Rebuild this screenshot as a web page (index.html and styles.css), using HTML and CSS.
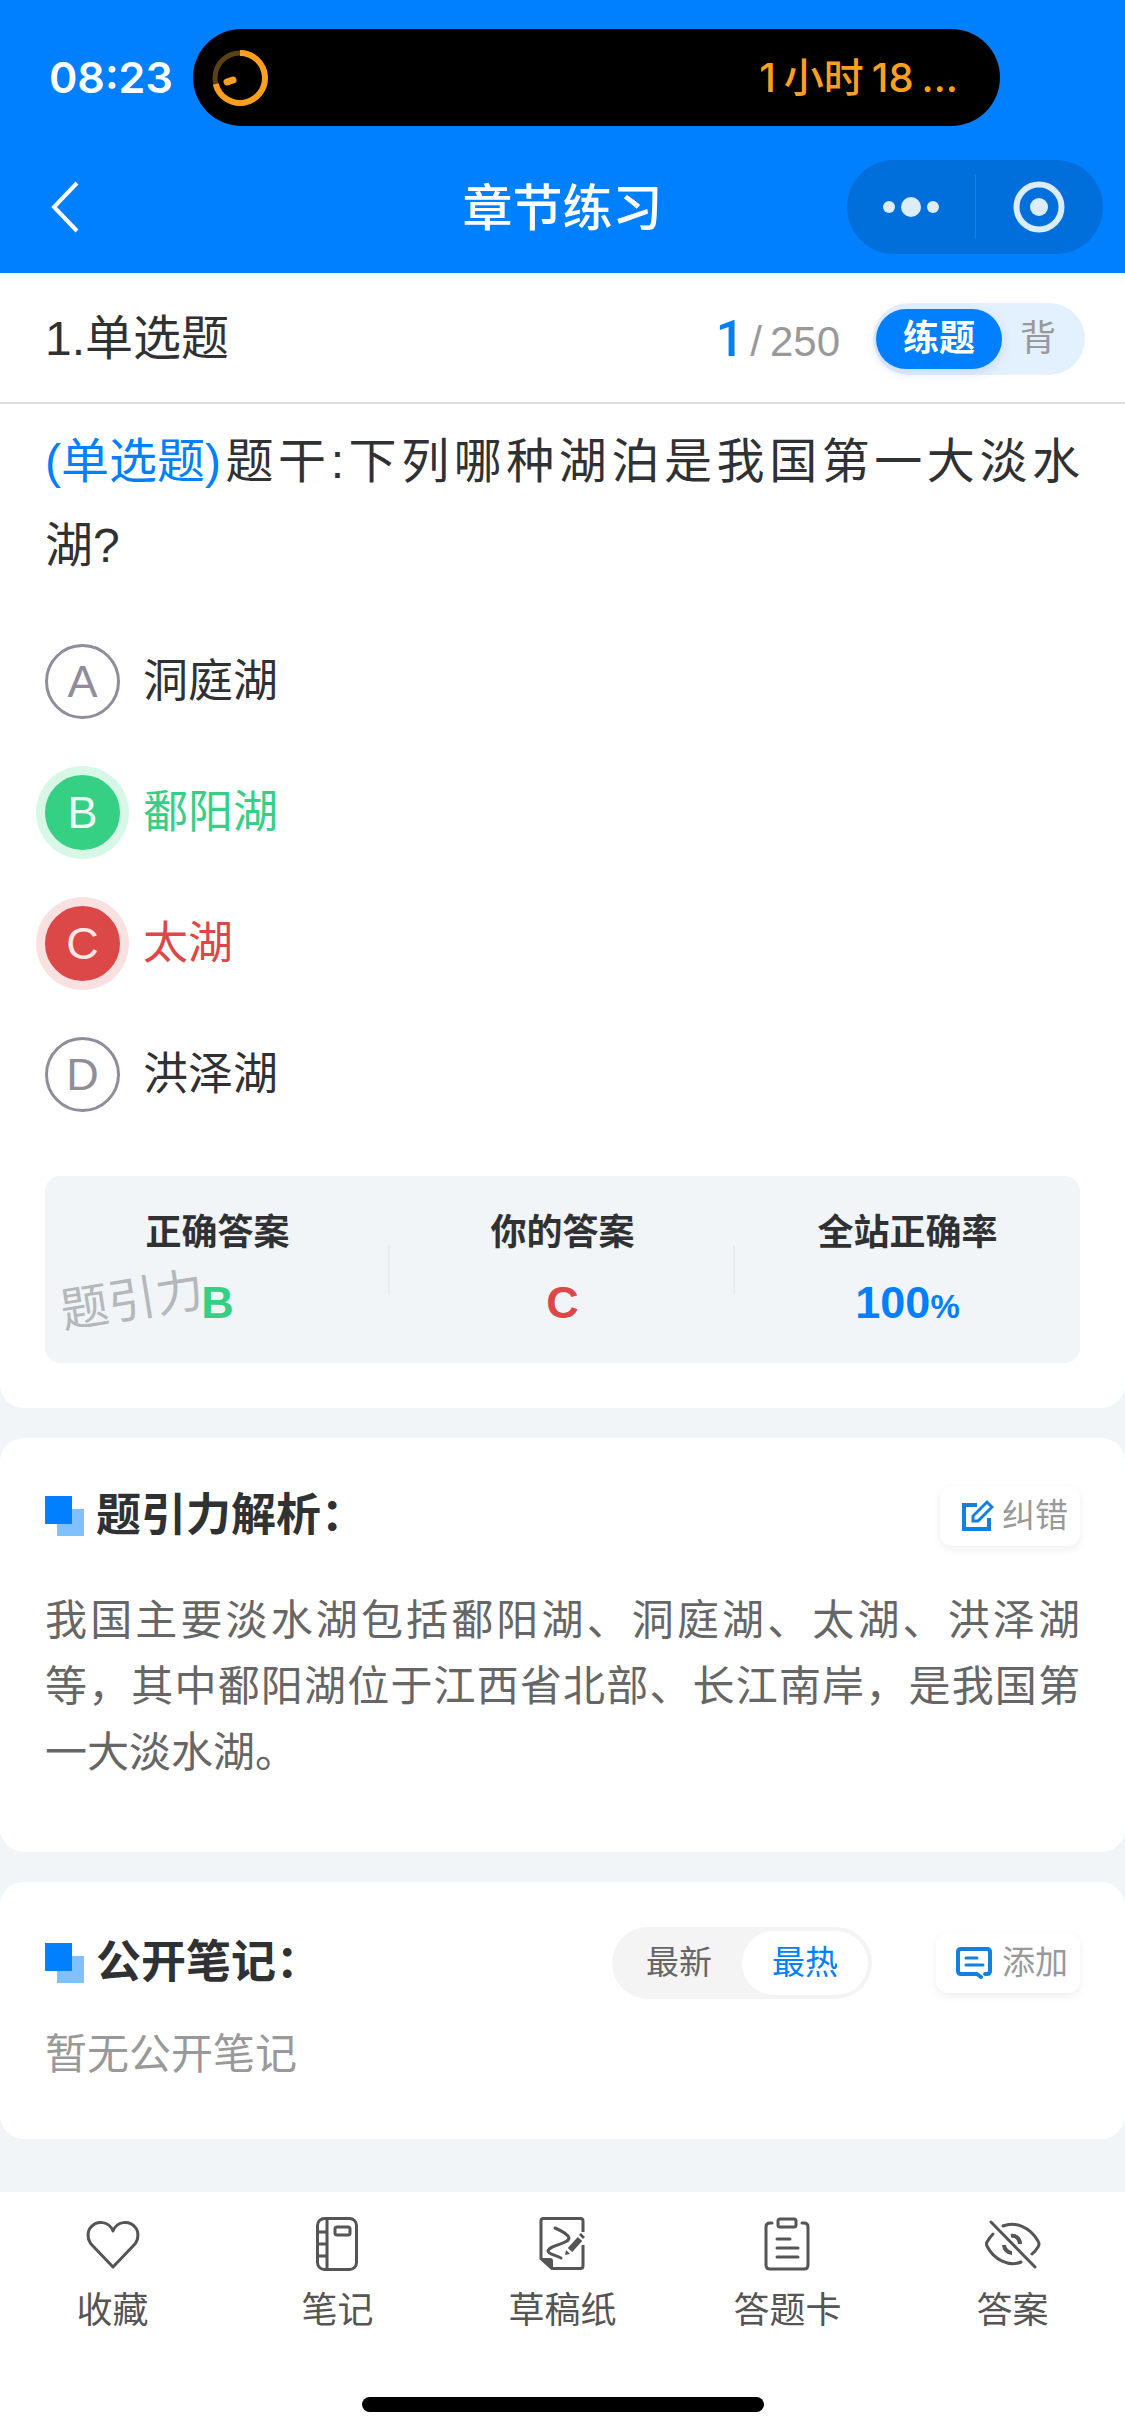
FILE: index.html
```html
<!DOCTYPE html>
<html lang="zh-CN">
<head>
<meta charset="utf-8">
<meta name="viewport" content="width=device-width, initial-scale=1">
<title>章节练习</title>
<link rel="stylesheet" href="styles.css">
</head>
<body>
<div class="app">
  <header class="top">
    <div class="status">
      <time class="clock">08:23</time>
      <div class="island">
        <svg class="timer" width="58" height="58" viewBox="0 0 58 58" fill="none" aria-hidden="true">
          <circle cx="29" cy="29" r="25" stroke="#5c4113" stroke-width="5"/>
          <path d="M29 4A25 25 0 1 1 4.700 35" stroke="#ff9f1e" stroke-width="6"/>
          <path d="M16 33l6-2" stroke="#ff9f1e" stroke-width="7" stroke-linecap="round"/>
        </svg>
        <span class="remaining"><span>1</span><span>小时</span><span>18</span><span>…</span></span>
      </div>
    </div>
    <nav class="nav">
      <button class="back" type="button" aria-label="返回">
        <svg width="32" height="52" viewBox="0 0 32 52" fill="none" stroke="#fff" stroke-width="4" aria-hidden="true"><path d="M29 2L6 26l23 24"/></svg>
      </button>
      <h1 class="title">章节练习</h1>
      <div class="capsule">
        <button type="button" aria-label="更多">
          <svg width="58" height="22" viewBox="0 0 58 22" fill="#dcecfb" aria-hidden="true"><circle cx="7" cy="11" r="6"/><circle cx="29" cy="11" r="10"/><circle cx="51" cy="11" r="6"/></svg>
        </button>
        <button type="button" aria-label="关闭">
          <svg width="52" height="52" viewBox="0 0 52 52" aria-hidden="true"><circle cx="26" cy="26" r="22.500" fill="none" stroke="#dcecfb" stroke-width="6"/><circle cx="26" cy="26" r="9" fill="#dcecfb"/></svg>
        </button>
      </div>
    </nav>
  </header>

  <main class="content">
    <section class="card card-first">
      <div class="meta">
        <h2 class="kind">1.单选题</h2>
        <p class="progress"><b>1</b><span>/</span>250</p>
        <div class="mode">
          <button class="mode-on" type="button">练题</button>
          <button class="mode-off" type="button">背</button>
        </div>
      </div>
      <p class="question">
        <span class="line line-full"><span class="tag">(单选题)</span>题干:下列哪种湖泊是我国第一大淡水</span>
        <span class="line">湖?</span>
      </p>
      <div class="options">
        <button class="option" type="button"><span class="mark">A</span>洞庭湖</button>
        <button class="option right" type="button"><span class="mark">B</span>鄱阳湖</button>
        <button class="option wrong" type="button"><span class="mark">C</span>太湖</button>
        <button class="option" type="button"><span class="mark">D</span>洪泽湖</button>
      </div>
      <div class="result">
        <dl class="stats">
          <div class="stat"><dt>正确答案</dt><dd class="good">B</dd></div>
          <div class="stat"><dt>你的答案</dt><dd class="bad">C</dd></div>
          <div class="stat"><dt>全站正确率</dt><dd class="rate">100<small>%</small></dd></div>
        </dl>
        <span class="watermark">题引力</span>
      </div>
    </section>

    <section class="card card-analysis">
      <div class="head">
        <i class="squares"></i>
        <h2>题引力解析：</h2>
        <button class="chip" type="button">
          <svg width="36" height="36" viewBox="0 0 36 36" fill="none" stroke="#1380e0" stroke-width="4" aria-hidden="true"><path d="M19 7H6v24h25V20"/><path d="M15 18v5h5L34 9l-5-5z" stroke-width="3"/></svg>
          纠错
        </button>
      </div>
      <p class="analysis">我国主要淡水湖包括鄱阳湖、洞庭湖、太湖、洪泽湖等，其中鄱阳湖位于江西省北部、长江南岸，是我国第一大淡水湖。</p>
    </section>

    <section class="card card-notes">
      <div class="head">
        <i class="squares"></i>
        <h2>公开笔记：</h2>
        <div class="sort">
          <button type="button">最新</button>
          <button class="sort-on" type="button">最热</button>
        </div>
        <button class="chip" type="button">
          <svg width="40" height="36" viewBox="0 0 40 36" fill="none" stroke="#1380e0" stroke-width="4" stroke-linecap="round" stroke-linejoin="round" aria-hidden="true"><path d="M31 29h2q3 0 3-3V7q0-3-3-3H7q-3 0-3 3v19q0 3 3 3h16l4 3"/><path d="M12 13h11M12 20h17" stroke-width="3"/></svg>
          添加
        </button>
      </div>
      <p class="empty">暂无公开笔记</p>
    </section>
  </main>

  <footer class="bottom">
    <nav class="tabs">
      <a href="#fav">
        <svg width="60" height="60" viewBox="0 0 60 60" fill="none" stroke="#555" stroke-width="3" stroke-linejoin="round" aria-hidden="true"><path d="M30 53L9 31C4 26 4 17 8 13c6-7 18-6 22 4 4-10 16-11 22-4 4 4 4 13-1 18z"/></svg>
        收藏
      </a>
      <a href="#notes">
        <svg width="60" height="60" viewBox="0 0 60 60" fill="none" stroke="#555" stroke-width="3" aria-hidden="true"><rect x="9.500" y="4.500" width="39" height="51" rx="7"/><path d="M19 4v52M9 18h10M9 30h10M9 42h10"/><rect x="27" y="13" width="15" height="8" rx="2"/></svg>
        笔记
      </a>
      <a href="#draft">
        <svg width="60" height="60" viewBox="0 0 60 60" fill="none" stroke="#555" stroke-width="3" aria-hidden="true"><path d="M50 18V7q0-2.500-2.500-2.500H10.500Q8 4.500 8 7v37.500L19 54.500h28.500q2.500 0 2.500-2.500V31"/><path d="M8 44h9q3 0 3 3v8z" fill="#555" stroke="none"/><path d="M22 14c7 3 13 6 14 10 0 6-20 7-21 13 0 3 7 4 13 7" stroke-linecap="round"/><path d="M37 36L47 25" stroke-width="6"/><path d="M32 41l1-5 4 4zM46 21l2-2 4 4-2 2z" fill="#555" stroke="none"/></svg>
        草稿纸
      </a>
      <a href="#card">
        <svg width="60" height="60" viewBox="0 0 60 60" fill="none" stroke="#555" stroke-width="3" stroke-linecap="round" aria-hidden="true"><path d="M14 9h-2q-4 0-4 4v38q0 4 4 4h34q4 0 4-4V13q0-4-4-4h-2"/><rect x="20" y="5" width="18" height="8" rx="2"/><path d="M19 25h13M19 34h21M19 43h21"/></svg>
        答题卡
      </a>
      <a href="#answer">
        <svg width="60" height="60" viewBox="0 0 60 60" fill="none" stroke="#555" stroke-width="3" stroke-linecap="round" aria-hidden="true"><path d="M8 8l44 45"/><path d="M20 12c12-5 27 1 35 15q2 3 0 6-3 5-6 7"/><path d="M10 20q-3 3-6 8-1 2 0 4c7 14 22 21 34 16"/><path d="M28 22c5-1 9 3 9 8M21 31c0 4 4 8 8 8" stroke-width="4" stroke-linecap="butt"/></svg>
        答案
      </a>
    </nav>
    <div class="home-bar"></div>
  </footer>
</div>
</body>
</html>
```
FILE: styles.css
```css
* {
  box-sizing: border-box;
}

body,
h1,
h2,
p,
dl,
dd {
  margin: 0;
}

body {
  background: #f1f5f8;
  color: #303133;
  font-family: "Liberation Sans", "Noto Sans CJK SC", sans-serif;
  font-size: 45px;
  line-height: 1.2;
}

button {
  padding: 0;
  border: 0;
  background: none;
  color: inherit;
  font: inherit;
}

svg {
  display: block;
  flex: none;
}

.app {
  display: flex;
  flex-direction: column;
  min-height: 100vh;
}

/* Blue header */
.top {
  padding-bottom: 19px;
  background: #0080ff;
  color: #fff;
}

.status {
  display: flex;
  align-items: center;
  padding: 29px 125px 0 49px;
}

.clock {
  flex: 0 0 144px;
  font-family: Inter, sans-serif;
  font-size: 43px;
  font-weight: 600;
}

.island {
  display: flex;
  flex: 1;
  align-items: center;
  justify-content: space-between;
  height: 97px;
  padding: 0 42px 0 18px;
  border-radius: 49px;
  background: #000;
}

.remaining {
  display: flex;
  gap: 8px;
  color: #ff9f1e;
  font-family: Inter, "Noto Sans CJK SC", sans-serif;
  font-size: 40px;
  font-weight: 500;
}

.nav {
  display: grid;
  grid-template-columns: 1fr auto 1fr;
  align-items: center;
  margin-top: 34px;
  padding: 0 22px 0 48px;
}

.back {
  justify-self: start;
}

.title {
  padding: 4px 26px 0 0;
  font-size: 50px;
  font-weight: 500;
  line-height: 60px;
}

.capsule {
  display: flex;
  justify-self: end;
  width: 256px;
  height: 94px;
  border-radius: 47px;
  background: linear-gradient(#1a80e2, #1a80e2) center / 1px 64px no-repeat #006fdb;
}

.capsule button {
  display: grid;
  flex: 1;
  place-items: center;
}

/* Cards */
.content {
  display: flex;
  flex-direction: column;
  gap: 30px;
}

.card {
  padding: 0 45px;
  border-radius: 24px;
  background: #fff;
}

.card-first {
  padding-bottom: 45px;
  border-radius: 0 0 24px 24px;
}

.meta {
  display: flex;
  align-items: center;
  height: 131px;
  margin: 0 -45px;
  padding: 2px 40px 0 45px;
  border-bottom: 2px solid #dfdfe1;
}

.kind {
  flex: 1;
  font-size: 48px;
  font-weight: 400;
}

.progress {
  color: #999;
  font-size: 42px;
}

.progress b {
  color: #0080ff;
  font-family: Roboto, "Liberation Sans", sans-serif;
  font-size: 50px;
  font-weight: 500;
}

.progress span {
  margin: 0 8px 0 6px;
}

.mode {
  display: flex;
  width: 212px;
  height: 72px;
  margin-left: 33px;
  padding: 6px 3px;
  border-radius: 36px;
  background: #e3f1fe;
  font-size: 36px;
}

.mode-on {
  width: 126px;
  border-radius: 30px;
  background: #0080ff;
  box-shadow: 0 4px 12px rgba(0, 60, 140, 0.12);
  color: #fff;
  font-weight: 700;
}

.mode-off {
  flex: 1;
  padding-right: 8px;
  color: #999;
}

.question {
  padding-top: 16px;
  font-size: 48px;
  line-height: 84px;
}

.line {
  display: block;
}

.line-full {
  text-align-last: justify;
}

.tag {
  display: inline-block;
  color: #0080ff;
}

.options {
  display: flex;
  flex-direction: column;
  margin-top: 28px;
}

.option {
  display: flex;
  align-items: center;
  gap: 23px;
  height: 131px;
  text-align: left;
}

.mark {
  display: grid;
  place-items: center;
  width: 75px;
  height: 75px;
  border: 3px solid #8f8d9a;
  border-radius: 50%;
  color: #8f8d9a;
}

.right {
  color: #36d085;
}

.right .mark {
  border-color: #36d085;
  background: #36d085;
  box-shadow: 0 0 0 9px #d8f8e7;
  color: #e8fff3;
}

.wrong {
  color: #dc4747;
}

.wrong .mark {
  border-color: #dc4747;
  background: #dc4747;
  box-shadow: 0 0 0 9px #fae1e1;
  color: #ffe9e6;
}

.result {
  position: relative;
  margin-top: 36px;
}

.stats {
  display: flex;
  padding: 30px 0;
  border-radius: 15px;
  background: #f1f5f8;
  font-weight: 700;
  text-align: center;
}

.stat {
  flex: 1;
}

.stat:not(:last-child) {
  background: linear-gradient(#e9edf1, #e9edf1) right center / 2px 50px no-repeat;
}

.stat dt {
  font-size: 36px;
  line-height: 54px;
}

.stat dd {
  margin-top: 13px;
  line-height: 60px;
}

.stat small {
  font-size: 33px;
  line-height: 1;
}

.good {
  color: #36d085;
}

.bad {
  color: #dc4747;
}

.rate {
  color: #0080ff;
}

.watermark {
  position: absolute;
  bottom: 30px;
  left: 15px;
  color: #b4b8bb;
  font-size: 48px;
  line-height: 64px;
  transform: rotate(-9deg);
}

.card-analysis {
  padding-top: 42px;
  padding-bottom: 66px;
}

.card-notes {
  padding-top: 45px;
  padding-bottom: 51px;
}

.head {
  display: flex;
  align-items: center;
  height: 72px;
}

.head h2 {
  flex: 1;
  margin-left: 12px;
  font-size: 45px;
  font-weight: 700;
  line-height: 60px;
}

.squares {
  width: 39px;
  height: 40px;
  background:
    linear-gradient(#0080ff, #0080ff) left top / 27px 28px no-repeat,
    linear-gradient(#80c0ff, #80c0ff) right bottom / 27px 27px no-repeat;
}

.chip {
  display: flex;
  align-items: center;
  gap: 8px;
  height: 60px;
  padding: 0 12px 0 18px;
  border-radius: 12px;
  background: #fff;
  box-shadow: 0 3px 8px rgba(0, 0, 0, 0.07);
  color: #999;
  font-size: 33px;
}

.sort {
  display: flex;
  width: 260px;
  height: 72px;
  margin-right: 64px;
  padding: 4px;
  border-radius: 36px;
  background: #f4f4f4;
  color: #666;
  font-size: 33px;
}

.sort button {
  flex: 1;
  border-radius: 32px;
}

.sort .sort-on {
  background: #fff;
  color: #0080ff;
}

.analysis {
  margin-top: 36px;
  color: #666;
  font-size: 42px;
  line-height: 66px;
  text-align: justify;
}

.empty {
  margin-top: 23px;
  color: #999;
  font-size: 42px;
  line-height: 66px;
}

/* Bottom bar */
.bottom {
  margin-top: auto;
  padding: 22px 0 24px;
  background: #fff;
}

.tabs {
  display: flex;
}

.tabs a {
  display: flex;
  flex: 1;
  flex-direction: column;
  align-items: center;
  gap: 10px;
  color: #555;
  font-size: 36px;
  line-height: 54px;
  text-decoration: none;
}

.home-bar {
  width: 402px;
  height: 15px;
  margin: 59px auto 0;
  border-radius: 8px;
  background: #000;
}
```
